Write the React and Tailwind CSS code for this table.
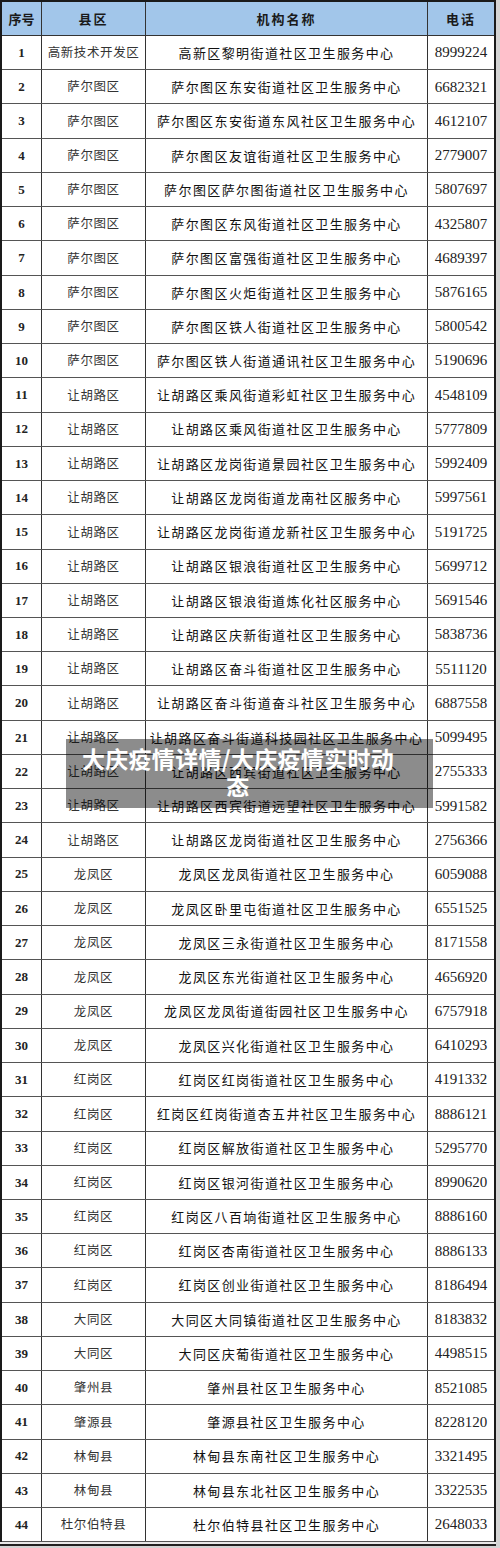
import React from 'react';

// 大庆市社区卫生服务中心电话表
const rows = [
  ['高新技术开发区', '高新区黎明街道社区卫生服务中心', '8999224'],
  ['萨尔图区', '萨尔图区东安街道社区卫生服务中心', '6682321'],
  ['萨尔图区', '萨尔图区东安街道东风社区卫生服务中心', '4612107'],
  ['萨尔图区', '萨尔图区友谊街道社区卫生服务中心', '2779007'],
  ['萨尔图区', '萨尔图区萨尔图街道社区卫生服务中心', '5807697'],
  ['萨尔图区', '萨尔图区东风街道社区卫生服务中心', '4325807'],
  ['萨尔图区', '萨尔图区富强街道社区卫生服务中心', '4689397'],
  ['萨尔图区', '萨尔图区火炬街道社区卫生服务中心', '5876165'],
  ['萨尔图区', '萨尔图区铁人街道社区卫生服务中心', '5800542'],
  ['萨尔图区', '萨尔图区铁人街道通讯社区卫生服务中心', '5190696'],
  ['让胡路区', '让胡路区乘风街道彩虹社区卫生服务中心', '4548109'],
  ['让胡路区', '让胡路区乘风街道社区卫生服务中心', '5777809'],
  ['让胡路区', '让胡路区龙岗街道景园社区卫生服务中心', '5992409'],
  ['让胡路区', '让胡路区龙岗街道龙南社区服务中心', '5997561'],
  ['让胡路区', '让胡路区龙岗街道龙新社区卫生服务中心', '5191725'],
  ['让胡路区', '让胡路区银浪街道社区卫生服务中心', '5699712'],
  ['让胡路区', '让胡路区银浪街道炼化社区服务中心', '5691546'],
  ['让胡路区', '让胡路区庆新街道社区卫生服务中心', '5838736'],
  ['让胡路区', '让胡路区奋斗街道社区卫生服务中心', '5511120'],
  ['让胡路区', '让胡路区奋斗街道奋斗社区卫生服务中心', '6887558'],
  ['让胡路区', '让胡路区奋斗街道科技园社区卫生服务中心', '5099495'],
  ['让胡路区', '让胡路区西宾街道社区卫生服务中心', '2755333'],
  ['让胡路区', '让胡路区西宾街道远望社区卫生服务中心', '5991582'],
  ['让胡路区', '让胡路区龙岗街道社区卫生服务中心', '2756366'],
  ['龙凤区', '龙凤区龙凤街道社区卫生服务中心', '6059088'],
  ['龙凤区', '龙凤区卧里屯街道社区卫生服务中心', '6551525'],
  ['龙凤区', '龙凤区三永街道社区卫生服务中心', '8171558'],
  ['龙凤区', '龙凤区东光街道社区卫生服务中心', '4656920'],
  ['龙凤区', '龙凤区龙凤街道街园社区卫生服务中心', '6757918'],
  ['龙凤区', '龙凤区兴化街道社区卫生服务中心', '6410293'],
  ['红岗区', '红岗区红岗街道社区卫生服务中心', '4191332'],
  ['红岗区', '红岗区红岗街道杏五井社区卫生服务中心', '8886121'],
  ['红岗区', '红岗区解放街道社区卫生服务中心', '5295770'],
  ['红岗区', '红岗区银河街道社区卫生服务中心', '8990620'],
  ['红岗区', '红岗区八百垧街道社区卫生服务中心', '8886160'],
  ['红岗区', '红岗区杏南街道社区卫生服务中心', '8886133'],
  ['红岗区', '红岗区创业街道社区卫生服务中心', '8186494'],
  ['大同区', '大同区大同镇街道社区卫生服务中心', '8183832'],
  ['大同区', '大同区庆葡街道社区卫生服务中心', '4498515'],
  ['肇州县', '肇州县社区卫生服务中心', '8521085'],
  ['肇源县', '肇源县社区卫生服务中心', '8228120'],
  ['林甸县', '林甸县东南社区卫生服务中心', '3321495'],
  ['林甸县', '林甸县东北社区卫生服务中心', '3322535'],
  ['杜尔伯特县', '杜尔伯特县社区卫生服务中心', '2648033'],
];

const cjk = "font-['Noto_Sans_CJK_SC',sans-serif]";
const serif = "font-['Liberation_Serif','Noto_Sans_CJK_SC',serif]";

const Row = ({ n, county, name, phone }) => (
  <div className="flex h-[34.24px] border-b border-[#555]">
    <div className={`w-[40px] border-r border-[#333] flex items-center justify-center text-[13px] font-bold text-[#222] ${serif}`}>
      {n}
    </div>
    <div className={`w-[104px] border-r border-[#333] flex items-center justify-center text-[12.5px] tracking-[0.6px] text-[#333] ${cjk}`}>
      {county}
    </div>
    <div className={`w-[282px] border-r border-[#333] flex items-center justify-center whitespace-nowrap text-[13px] tracking-[1.4px] text-[#111] ${cjk}`}>
      {name}
    </div>
    <div className={`w-[66px] flex items-center justify-center text-[15px] text-[#222] ${serif}`}>
      {phone}
    </div>
  </div>
);

export default function App() {
  return (
    <div className="relative w-[500px] h-[1548px] bg-[#d4d4d4] overflow-hidden">
      <div className="w-[496px] bg-white border-l-2 border-t-2 border-r-2 border-[#1a1a1a]">
        {/* header */}
        <div className={`flex h-[34px] bg-[#a2c6ea] border-b border-[#333] text-[13px] font-bold text-[#1a1a1a] ${cjk}`}>
          <div className="w-[40px] border-r border-[#333] flex items-center justify-center">序号</div>
          <div className="w-[104px] border-r border-[#333] flex items-center justify-center tracking-[2px]">县区</div>
          <div className="w-[282px] border-r border-[#333] flex items-center justify-center tracking-[2px]">机构名称</div>
          <div className="w-[66px] flex items-center justify-center tracking-[2px]">电话</div>
        </div>
        {rows.map((r, i) => (
          <Row key={i} n={i + 1} county={r[0]} name={r[1]} phone={r[2]} />
        ))}
      </div>
      <div className="w-[496px] h-[2px] bg-[#e8e8e8]" />
      <div className="w-[496px] h-[2px] bg-[#222]" />

      {/* title overlay */}
      <div className="absolute left-[66px] top-[739px] w-[367px] h-[69px] bg-[rgba(0,0,0,0.45)] pl-[12px] pr-[35px] pt-[6px]">
        <p className={`text-center text-[23px] leading-[27px] font-bold text-white tracking-[0.3px] ${cjk}`}>
          大庆疫情详情/大庆疫情实时动态
        </p>
      </div>
    </div>
  );
}
